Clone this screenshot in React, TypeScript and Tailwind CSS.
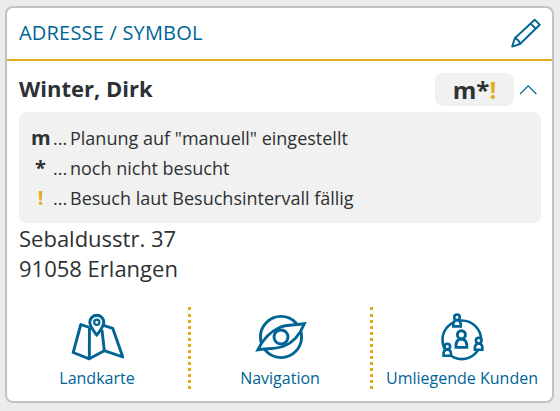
import type { ReactNode } from 'react'

type Hint = { symbol: string; text: string; due?: boolean }

const hints: Hint[] = [
  { symbol: 'm', text: 'Planung auf "manuell" eingestellt' },
  { symbol: '*', text: 'noch nicht besucht' },
  { symbol: '!', text: 'Besuch laut Besuchsintervall fällig', due: true },
]

function PencilIcon() {
  return (
    <svg width="30" height="30" viewBox="0 0 30 30" fill="none" stroke="#006495" strokeWidth="1.9" strokeLinejoin="round">
      <path d="M1.2 28.6 L3.8 20.3 L23.7 1.7 L28.8 6.8 L9 26 Z" />
      <path d="M3.8 20.3 Q8.2 21.4 9 26" />
      <path d="M19.5 5.6 L25 10.8" />
    </svg>
  )
}

function MapIcon() {
  return (
    <svg width="53" height="48" viewBox="0 0 53 48" fill="none" stroke="#006495" strokeWidth="2.9" strokeLinejoin="round">
      <path d="M18.5 14.5 L9.8 11.5 L2.2 39.5 L18.3 45.8 L33.3 37.7 L51.8 44 L41.7 15.3 L32.5 12.3" />
      <path d="M18.5 14.5 L18.3 45.8 M31 17 L33.3 37.7" />
      <path d="M25.8 22.3 C22.5 17.5 18.8 13.5 18.8 9.3 a7 7 0 0 1 14 0 C32.8 13.5 29 17.5 25.8 22.3 Z" fill="#fff" />
      <circle cx="25.8" cy="9.3" r="2.6" strokeWidth="2.2" />
    </svg>
  )
}

function CompassIcon() {
  return (
    <svg width="53" height="48" viewBox="0 0 53 48" fill="none" stroke="#006495" strokeWidth="2.9">
      <circle cx="27" cy="24" r="20.6" />
      <path d="M3.8 36.8 C9 26 16 19 25 14.8 C33 11 42 12.5 50.3 10.7 C46 21.5 39 29.5 30 33 C21.5 36.5 12 35 3.8 36.8 Z" fill="#fff" />
      <circle cx="27" cy="24" r="7" />
    </svg>
  )
}

function CustomersIcon() {
  return (
    <svg width="53" height="48" viewBox="0 0 53 48" fill="#fff" stroke="#006495" strokeWidth="2.6">
      <circle cx="25.8" cy="26.8" r="19.3" fill="none" />
      <path d="M17.3 13.4 V11.5 Q17.3 8 19.8 7.2 H22.2 Q24.7 8 24.7 11.5 V13.4 Z" />
      <circle cx="21" cy="4.3" r="2.8" />
      <path d="M7.5 42.8 V41 Q7.5 37.5 10 36.7 H12.6 Q15 37.5 15 41 V42.8 Z" />
      <circle cx="11.3" cy="33.6" r="2.8" />
      <path d="M38.9 36.8 V35 Q38.9 31.5 41.4 30.7 H44 Q46.4 31.5 46.4 35 V36.8 Z" />
      <circle cx="42.7" cy="27.6" r="2.8" />
      <path d="M20 34.4 V32 Q20.2 28 23.2 26.3 H27.4 Q30.6 28 30.8 32 V34.4 Z" strokeWidth="2.9" />
      <circle cx="25.4" cy="21.7" r="4" strokeWidth="2.9" />
    </svg>
  )
}

function Action({ label, children }: { label: string; children: ReactNode }) {
  return (
    <button className="flex flex-col items-center pt-[6px] text-[#006495]">
      {children}
      <span className="mr-px mt-[5px] whitespace-nowrap text-base leading-6">{label}</span>
    </button>
  )
}

function Divider() {
  return (
    <div className="flex h-[82px] flex-col justify-between">
      <div className="h-[3px] bg-[#e5ad1c]" />
      <div className="h-[75px] bg-[repeating-linear-gradient(to_bottom,#e5ad1c_0_3px,transparent_3px_6px)]" />
    </div>
  )
}

export default function App() {
  return (
    <div className="h-[411px] w-[560px] bg-[#ececec] pl-[5px] pt-[6px] font-['Open_Sans',sans-serif] text-[#2d3134]">
      <section className="flex h-[397px] w-[549px] flex-col rounded-lg border-2 border-[#bdc3c7] bg-white">
        <header className="flex h-[53px] shrink-0 items-center justify-between border-b-2 border-[#e5ad1c] pb-[2px] pl-3 pr-[11px]">
          <h2 className="text-xl font-medium tracking-[0.2px] text-[#006495]">ADRESSE / SYMBOL</h2>
          <PencilIcon />
        </header>

        <div className="flex h-[51px] shrink-0 items-center pl-3 pr-[15px] pt-[6px]">
          <h3 className="flex-1 pb-[2px] text-[22px] font-bold">Winter, Dirk</h3>
          <div className="h-[33px] w-[79px] rounded-lg bg-[#f1f1f1] text-center text-2xl font-bold leading-[33px]">
            m*<span className="text-[#e5ad1c]">!</span>
          </div>
          <svg className="ml-[5px]" width="18" height="12" viewBox="0 0 18 12" fill="none" stroke="#006495" strokeWidth="1.2">
            <path d="M1 10 L9.2 1.8 L17.4 10" />
          </svg>
        </div>

        <ul className="mx-3 h-[111px] w-[522px] shrink-0 rounded-lg bg-[#f1f1f1] pl-3 pt-[11px] text-lg leading-[30px]">
          {hints.map((hint) => (
            <li key={hint.symbol} className="flex h-[30px] items-baseline">
              <span className={hint.due ? 'w-[19px] text-center text-xl font-bold leading-[30px] text-[#e5ad1c]' : 'w-[19px] text-center text-xl font-bold leading-[30px]'}>
                {hint.symbol}
              </span>
              <span className="ml-[3px] w-[17px]">...</span>
              <span>{hint.text}</span>
            </li>
          ))}
        </ul>

        <address className="pl-3 text-[22px] not-italic leading-[30px]">
          Sebaldusstr. 37
          <br />
          91058 Erlangen
        </address>

        <nav className="mt-6 grid grid-cols-[181px_3px_179px_3px_179px]">
          <Action label="Landkarte"><MapIcon /></Action>
          <Divider />
          <Action label="Navigation"><CompassIcon /></Action>
          <Divider />
          <Action label="Umliegende Kunden"><CustomersIcon /></Action>
        </nav>
      </section>
    </div>
  )
}
